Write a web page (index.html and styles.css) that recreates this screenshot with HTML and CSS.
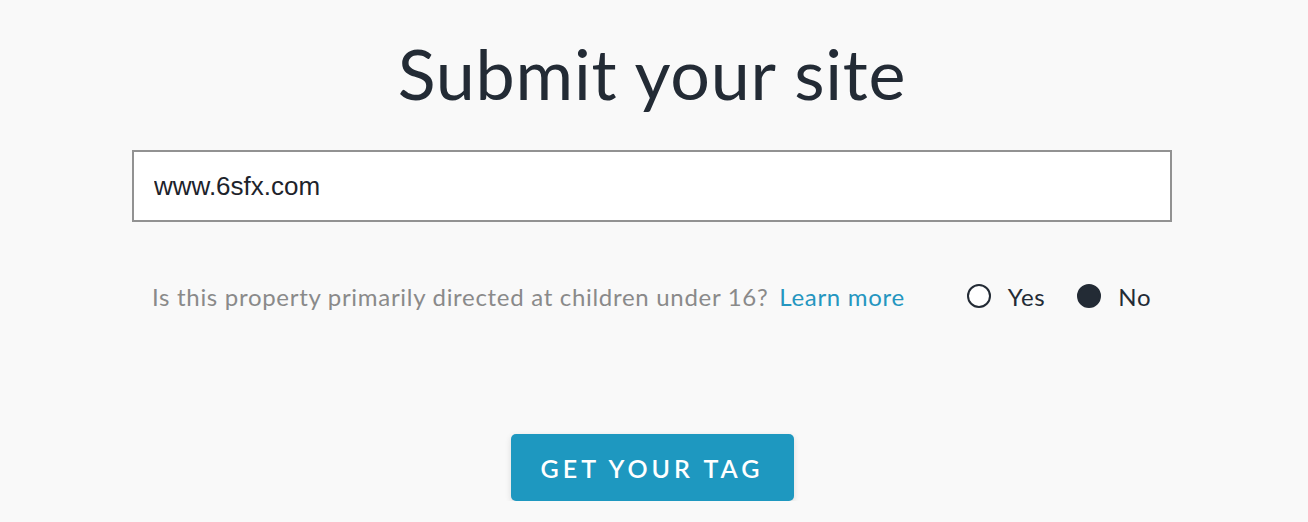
FILE: index.html
```html
<!DOCTYPE html>
<html lang="en">
<head>
    <meta charset="UTF-8">
    <meta name="viewport" content="width=device-width, initial-scale=1.0">
    <title>Submit your site</title>
    <link rel="stylesheet" href="styles.css">
</head>
<body>
    <div class="container">
        <h1 class="title">Submit your site</h1>
        <form class="site-form">
            <input type="text" class="site-input" value="www.6sfx.com" aria-label="Site URL">
            <div class="question-row">
                <p class="question">Is this property primarily directed at children under 16? <a href="#" class="learn-more">Learn more</a></p>
                <div class="options">
                    <label class="option"><span class="radio"></span>Yes</label>
                    <label class="option"><span class="radio checked"></span>No</label>
                </div>
            </div>
            <div class="actions">
                <button type="submit" class="submit-button">GET YOUR TAG</button>
            </div>
        </form>
    </div>
</body>
</html>
```

FILE: styles.css
```css
body {
    margin: 0;
    padding-right: 4px;
    background-color: #f9f9f9;
    font-family: Lato, "Noto Sans", sans-serif;
    color: #232b35;
}

.container {
    width: 1040px;
    margin: 0 auto;
    padding-top: 28px;
}

.title {
    margin: 0;
    text-align: center;
    font-size: 70px;
    font-weight: 400;
    letter-spacing: 0.8px;
    line-height: 90px;
    color: #232b35;
}

.site-form {
    margin-top: 32px;
}

.site-input {
    display: block;
    box-sizing: border-box;
    width: 100%;
    height: 72px;
    padding: 0 20px;
    border: 2px solid #929292;
    background: white;
    font-family: "Liberation Sans", Arial, sans-serif;
    font-size: 26px;
    color: #1d232b;
    outline: none;
}

.question-row {
    display: flex;
    align-items: center;
    padding-left: 20px;
    margin-top: 59px;
    height: 30px;
    font-size: 24px;
    letter-spacing: 0.7px;
    white-space: nowrap;
}

.question {
    margin: 0;
    flex-shrink: 0;
    color: #8a8a8a;
}

.learn-more {
    color: #2596c0;
    text-decoration: none;
    margin-left: 4px;
}

.options {
    display: flex;
    flex-shrink: 0;
    gap: 32px;
    margin-left: 62px;
}

.option {
    display: flex;
    align-items: center;
    gap: 17px;
    color: #232b35;
}

.radio {
    box-sizing: border-box;
    width: 24px;
    height: 24px;
    border: 2px solid #232b35;
    border-radius: 50%;
    background: white;
}

.radio.checked {
    background: #232b35;
}

.actions {
    display: flex;
    justify-content: center;
    margin-top: 123px;
}

.submit-button {
    width: 283px;
    height: 67px;
    padding: 0;
    border: none;
    border-radius: 5px;
    background-color: #1e98c0;
    color: white;
    font-family: Lato, "Noto Sans", sans-serif;
    font-size: 25px;
    font-weight: 600;
    letter-spacing: 4px;
    box-shadow: 0 2px 6px rgba(0, 0, 0, 0.12);
    cursor: pointer;
}
```
